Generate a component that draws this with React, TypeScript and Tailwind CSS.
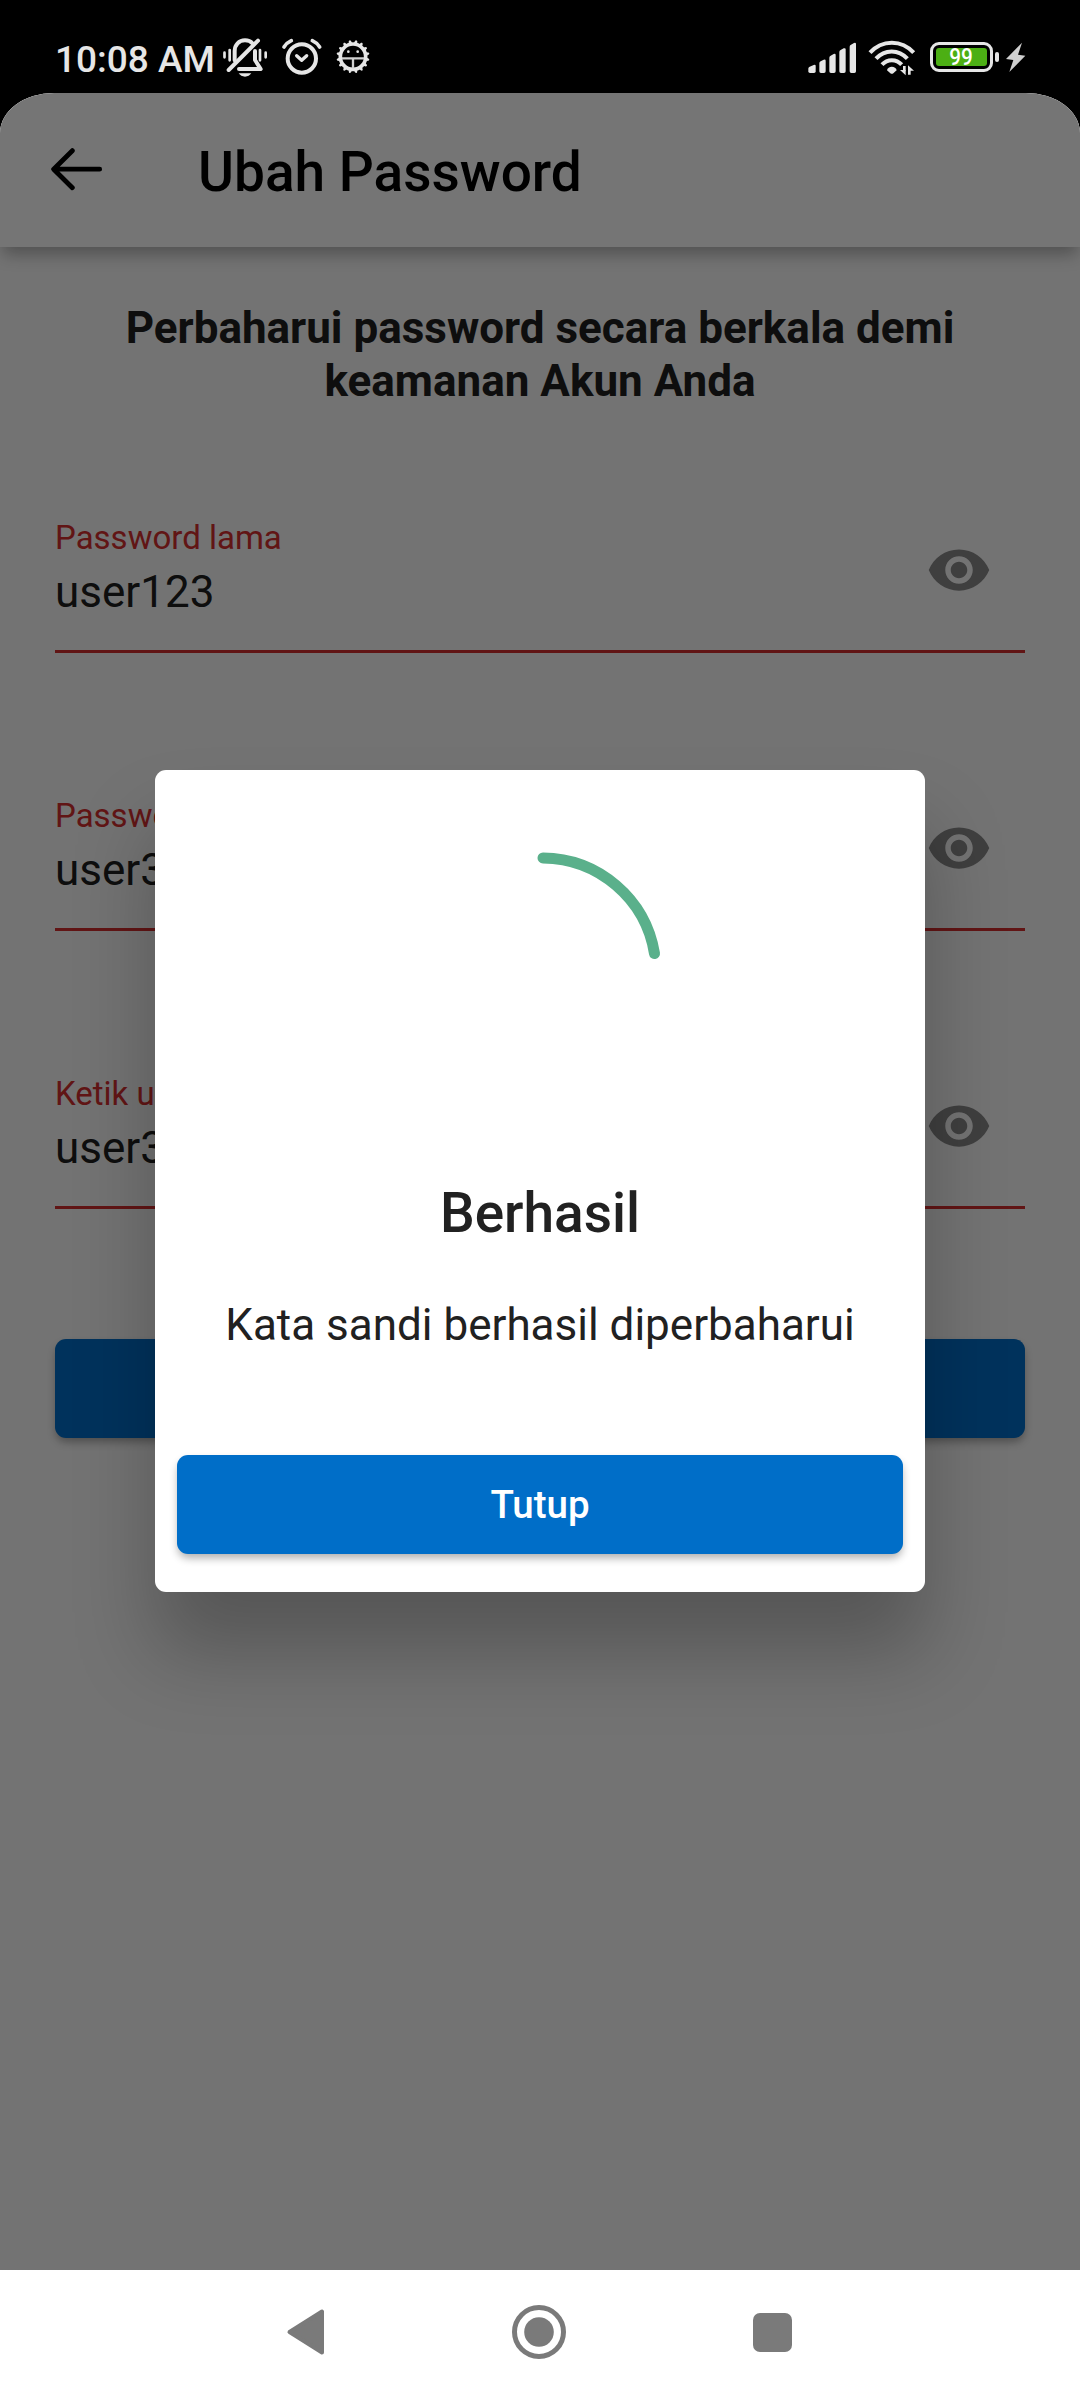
import type { ReactNode } from "react";

function EyeIcon() {
  return (
    <svg className="size-[66px]" viewBox="0 0 24 24" fill="#898989">
      <path d="M12 4.5C7 4.5 2.73 7.61 1 12c1.73 4.39 6 7.5 11 7.5s9.27-3.11 11-7.5c-1.73-4.39-6-7.5-11-7.5zM12 17c-2.76 0-5-2.24-5-5s2.24-5 5-5 5 2.24 5 5-2.24 5-5 5zm0-8c-1.66 0-3 1.34-3 3s1.34 3 3 3 3-1.34 3-3-1.34-3-3-3z" />
    </svg>
  );
}

function BellOffIcon() {
  return (
    <svg className="ml-[7px] mt-[36px] h-[42px] w-[48px]" viewBox="60 48 144 126" fill="none" stroke="#e6e6e6" strokeWidth="10" strokeLinecap="round">
      <path d="M73.500 98v14M89 90v31M180 90v31M197 98v14" strokeWidth="8" />
      <path d="M104 121V93c0-19 13-32 31-32 9 0 17 3 22 9" strokeWidth="12" />
      <path d="M86 150L174 62" strokeWidth="12" />
      <path d="M165 93v27l17 27H117" strokeWidth="12" strokeLinejoin="round" />
      <path d="M116 160h38c-4 6-11 10-19 10s-15-4-19-10z" fill="#e6e6e6" stroke="none" />
    </svg>
  );
}

function AlarmIcon() {
  return (
    <svg className="ml-[13px] mt-[36px] h-[42px] w-[42px]" viewBox="242 48 126 126" fill="none" stroke="#e6e6e6" strokeLinecap="round">
      <circle cx="304.500" cy="115.500" r="42.500" strokeWidth="12" />
      <path d="M251 81c5-8 13-15 22-19M336 62c9 4 17 11 22 19" strokeWidth="11" />
      <path d="M289 107l15 14 15-14" strokeWidth="10" strokeLinejoin="round" />
    </svg>
  );
}

function BugGearIcon() {
  const teeth = Array.from({ length: 16 }, (_, i) => i * 22.5 + 11.25);
  return (
    <svg className="ml-[11px] mt-[36px] h-[42px] w-[38px]" viewBox="402 48 114 126">
      <g fill="#e6e6e6">
        {teeth.map((angle) => (
          <path key={angle} d="M452 74l4-12q3-4 6 0l4 12z" transform={`rotate(${angle} 459 110)`} />
        ))}
      </g>
      <circle cx="459" cy="110" r="38" fill="none" stroke="#e6e6e6" strokeWidth="11" />
      <path d="M426 115h66M459 115v30" stroke="#d0d0d0" strokeWidth="7" />
      <circle cx="445" cy="95" r="4" fill="#e6e6e6" />
      <circle cx="473" cy="95" r="4" fill="#e6e6e6" />
    </svg>
  );
}

function SignalIcon() {
  return (
    <svg className="mt-[42px] h-[32px] w-[49px]" viewBox="84 126 147 96" fill="#e6e6e6">
      <path d="M85 206q0-4 4-6l12-5q6-2 6 3v16q0 5-5 5H90q-5 0-5-5z" />
      <path d="M118 190q0-4 4-6l9-5q6-2 6 3v32q0 5-5 5h-9q-5 0-5-5z" />
      <path d="M148 173q0-4 4-6l9-5q6-2 6 3v49q0 5-5 5h-9q-5 0-5-5z" />
      <path d="M178 156q0-4 4-6l9-5q6-2 6 3v66q0 5-5 5h-9q-5 0-5-5z" />
      <path d="M209 140q0-4 4-6l9-5q6-2 6 3v82q0 5-5 5h-9q-5 0-5-5z" />
    </svg>
  );
}

function WifiIcon() {
  return (
    <svg className="ml-[11px] mt-[40px] h-[36px] w-[48px]" viewBox="264 120 144 108" fill="none" stroke="#e6e6e6" strokeWidth="12">
      <path d="M270 158c36-40 95-40 131 0" />
      <path d="M288 176c26-29 68-29 94 0" />
      <path d="M306 194c16-18 43-18 59 0" />
      <path d="M321 211c2-14 27-14 29 0l-10 9q-4 3-9 0z" fill="#e6e6e6" stroke="none" />
      <path d="M373 198v16M388 224v-17" strokeWidth="8" />
      <path d="M360 210h17v16zM384 212h18l-18-16z" fill="#e6e6e6" stroke="none" />
    </svg>
  );
}

function BoltIcon() {
  return (
    <svg className="ml-[6px] mt-[42px] h-[31px] w-[22px]" viewBox="675 126 66 93" fill="#cfcfcf">
      <path d="M726 128l-48 49 22 3-12 36 48-49-22-3z" />
    </svg>
  );
}

function StatusBar() {
  return (
    <div className="flex h-[93px] shrink-0 items-start justify-between bg-black pl-[55px] pr-[53px]">
      <div className="flex items-start">
        <span className="mt-[37px] w-[158px] whitespace-nowrap text-[37px] font-medium leading-[45px] text-[#e6e6e6]">10:08 AM</span>
        <BellOffIcon />
        <AlarmIcon />
        <BugGearIcon />
      </div>
      <div className="flex items-start">
        <SignalIcon />
        <WifiIcon />
        <div className="ml-[14px] mt-[42px] h-[30px] w-[63px] rounded-[9px] border-[3px] border-[#e6e6e6] p-[3px]">
          <div className="flex h-[18px] w-full items-center justify-center rounded-[3px] bg-[#4caf14]">
            <span className="inline-block scale-x-90 pt-px text-[23px] font-medium leading-[18px] text-white">99</span>
          </div>
        </div>
        <div className="ml-[2px] mt-[52px] h-[10px] w-[4px] rounded-[2px] bg-[#e6e6e6]" />
        <BoltIcon />
      </div>
    </div>
  );
}

function AppBar() {
  return (
    <header className="relative flex h-[154px] shrink-0 items-center bg-white shadow-[0_10px_16px_-3px_rgba(0,0,0,0.3)]">
      <svg className="-mt-[2px] ml-[49px] h-[44px] w-[54px]" viewBox="147 441 162 132" fill="none" stroke="#000" strokeWidth="14.500" strokeLinecap="round" strokeLinejoin="round">
        <path d="M217 452L161 507.500L217 563M162 507.500H299" />
      </svg>
      <h1 className="ml-[95px] mt-[4px] text-[55px] font-medium leading-[64px] text-black">Ubah Password</h1>
    </header>
  );
}

function Field({ label, value }: { label: string; value: string }) {
  return (
    <div className="mb-[125px] flex h-[153px] items-start justify-between border-b-[3px] border-[#d32f2f]">
      <div>
        <div className="mt-[18px] text-[33px] leading-[39px] text-[#d32f2f]">{label}</div>
        <div className="mt-[9px] text-[44px] leading-[52px] text-[#202020]">{value}</div>
      </div>
      <div className="mr-[33px] mt-[37px]">
        <EyeIcon />
      </div>
    </div>
  );
}

function Button({ children }: { children?: ReactNode }) {
  return (
    <button className="block h-[99px] w-full rounded-[11px] bg-[#006ec8] text-[38.500px] font-medium leading-[99px] text-white shadow-[0_5px_9px_-1px_rgba(0,0,0,0.32)]">
      {children}
    </button>
  );
}

function SuccessDialog() {
  return (
    <div className="absolute inset-0 flex items-start justify-center bg-black/54">
      <div className="mt-[677px] flex h-[822px] w-[770px] flex-col items-center rounded-[11px] bg-white px-[22px] text-[#212121] shadow-[0_60px_80px_rgba(0,0,0,0.25)]">
        <svg className="mt-[62px] h-[278px] w-[278px]" viewBox="401 832 278 278" fill="none" stroke="#5ab08b" strokeWidth="11" strokeLinecap="round">
          <path d="M543 858A114 114 0 0 1 654.500 953.500" />
        </svg>
        <h2 className="mt-[71px] text-[55px] font-medium leading-[64px]">Berhasil</h2>
        <p className="mt-[54px] whitespace-nowrap text-[44px] leading-[52px]">Kata sandi berhasil diperbaharui</p>
        <div className="mt-[104px] w-full">
          <Button>Tutup</Button>
        </div>
      </div>
    </div>
  );
}

function NavBar() {
  return (
    <nav className="flex h-[130px] shrink-0 items-center bg-white pl-[286px] pb-[6px]">
      <svg className="h-[48px] w-[40px]" viewBox="0 0 40 48" fill="#7a7a7a" stroke="#7a7a7a" strokeWidth="4" strokeLinejoin="round">
        <path d="M3.500 24L36 3.500V44.500z" />
      </svg>
      <svg className="ml-[186px] size-[54px]" viewBox="0 0 54 54" fill="#7a7a7a">
        <circle cx="27" cy="27" r="24.500" fill="none" stroke="#7a7a7a" strokeWidth="5" />
        <circle cx="27" cy="27" r="14.800" />
      </svg>
      <div className="ml-[187px] size-[39px] rounded-[7px] bg-[#7a7a7a]" />
    </nav>
  );
}

export default function App() {
  return (
    <div className="flex h-[2400px] w-[1080px] flex-col overflow-hidden bg-black font-['Roboto',sans-serif]">
      <StatusBar />
      <div className="relative flex min-h-0 flex-1 flex-col overflow-hidden rounded-tl-[54px_40px] rounded-tr-[54px_40px] bg-[#fafafa]">
        <AppBar />
        <main className="flex-1 px-[55px] pt-[55px]">
          <p className="mb-[92px] text-center text-[44px] font-bold leading-[53px] text-[#202020]">
            Perbaharui password secara berkala demi
            <br />
            keamanan Akun Anda
          </p>
          <div className="pb-[5px]">
            <Field label="Password lama" value="user123" />
            <Field label="Password baru" value="user321" />
            <Field label="Ketik ulang password baru" value="user321" />
          </div>
          <Button>Simpan</Button>
        </main>
        <SuccessDialog />
      </div>
      <NavBar />
    </div>
  );
}
